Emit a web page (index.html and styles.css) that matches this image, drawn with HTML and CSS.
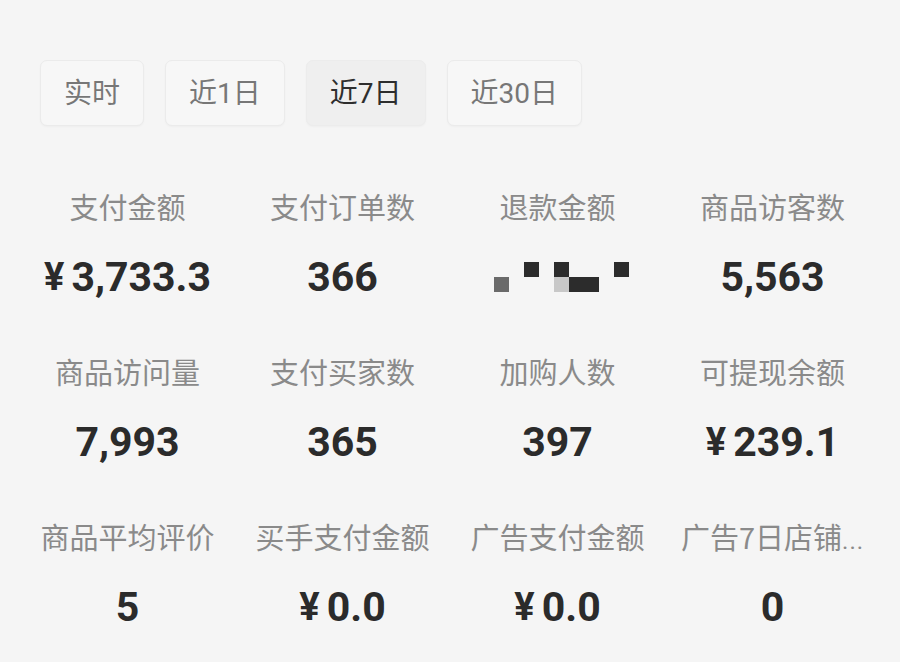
FILE: index.html
```html
<!DOCTYPE html>
<html lang="zh">
<head>
<meta charset="utf-8">
<link rel="stylesheet" href="styles.css">
</head>
<body>
<div class="page">
  <div class="tabs">
    <div class="tab">实时</div>
    <div class="tab">近1日</div>
    <div class="tab active">近7日</div>
    <div class="tab">近30日</div>
  </div>
  <div class="grid">
    <div class="cell"><div class="label">支付金额</div><div class="value"><span class="yen">¥</span>3,733.3</div></div>
    <div class="cell"><div class="label">支付订单数</div><div class="value">366</div></div>
    <div class="cell"><div class="label">退款金额</div><div class="value"><div class="mosaic"><i class="m1"></i><i class="m2"></i><i class="m3"></i><i class="m4"></i><i class="m5"></i><i class="m6"></i></div></div></div>
    <div class="cell"><div class="label">商品访客数</div><div class="value">5,563</div></div>
    <div class="cell"><div class="label">商品访问量</div><div class="value">7,993</div></div>
    <div class="cell"><div class="label">支付买家数</div><div class="value">365</div></div>
    <div class="cell"><div class="label">加购人数</div><div class="value">397</div></div>
    <div class="cell"><div class="label">可提现余额</div><div class="value"><span class="yen">¥</span>239.1</div></div>
    <div class="cell"><div class="label">商品平均评价</div><div class="value">5</div></div>
    <div class="cell"><div class="label">买手支付金额</div><div class="value"><span class="yen">¥</span>0.0</div></div>
    <div class="cell"><div class="label">广告支付金额</div><div class="value"><span class="yen">¥</span>0.0</div></div>
    <div class="cell"><div class="label">广告7日店铺<span class="dots">...</span></div><div class="value">0</div></div>
  </div>
</div>
</body>
</html>
```
FILE: styles.css
```css
html, body {
  margin: 0;
  padding: 0;
  background: #f5f5f5;
}
body {
  font-family: "Noto Sans CJK SC", "Noto Sans", sans-serif;
  width: 900px;
  height: 662px;
  overflow: hidden;
}
.page {
  padding: 60px 20px 0;
}
.tabs {
  display: flex;
  gap: 21px;
  padding-left: 20px;
}
.tab {
  height: 64px;
  padding: 0 23px;
  border: 1px solid #ebebeb;
  border-radius: 7px;
  background: #f7f7f7;
  color: #777;
  font-family: "Roboto", "Noto Sans CJK SC", sans-serif;
  font-size: 28px;
  line-height: 66px;
  box-shadow: 0 1px 2px rgba(0,0,0,0.03);
}
.tab.active {
  background: #efefef;
  color: #2e2e2e;
  border-color: #ececec;
}
.grid {
  margin-top: 39px;
  display: grid;
  grid-template-columns: repeat(4, 215px);
}
.cell {
  display: flex;
  flex-direction: column;
  align-items: center;
  padding: 21px 0 28px;
}
.label {
  height: 40px;
  font-size: 29px;
  line-height: 40px;
  color: #8a8a8a;
  white-space: nowrap;
}
.dots {
  font-family: "Roboto", sans-serif;
  font-size: 24px;
  line-height: 1;
  letter-spacing: 1px;
}
.value {
  margin-top: 26px;
  height: 50px;
  line-height: 50px;
  font-family: "Roboto", "Noto Sans CJK SC", sans-serif;
  font-weight: 700;
  font-size: 41px;
  color: #2b2b2b;
  display: flex;
  align-items: center;
}
.yen {
  margin-right: 7px;
  font-size: 38px;
}
.mosaic {
  position: relative;
  width: 135px;
  height: 30px;
  margin-left: 8px;
}
.mosaic i {
  position: absolute;
  width: 15px;
  height: 15px;
  background: #2c2c2c;
}
.mosaic .m1 { left: 0; top: 15px; background: #6a6a6a; }
.mosaic .m2 { left: 30px; top: 0; }
.mosaic .m3 { left: 60px; top: 0; }
.mosaic .m4 { left: 60px; top: 15px; background: #c8c8c8; }
.mosaic .m5 { left: 75px; top: 15px; width: 30px; }
.mosaic .m6 { left: 120px; top: 0; }
```
